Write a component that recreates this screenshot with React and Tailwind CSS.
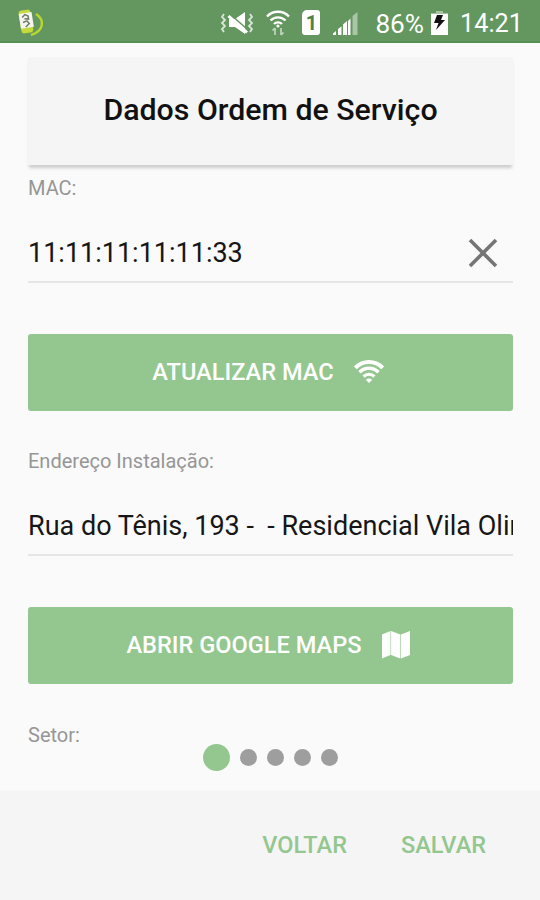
import React from "react";

const AppBadge = () => (
  <svg className="ml-[17px] h-[30px] w-[28px]" viewBox="0 0 28 30">
    <path d="M19 6 C28 12 27 23 14 27" fill="none" stroke="#b9d532" strokeWidth="2.4" />
    <g transform="rotate(-9 9 14)">
      <rect x="3" y="2" width="12" height="23" rx="3" fill="#c6da3c" />
      <rect x="3" y="5" width="13" height="15" fill="#f4f5ef" />
      <path d="M6 9l3-2.500 3 2v3l-4-1M6 14l4-1 2 3-4 3" fill="none" stroke="#6e7c62" strokeWidth="1.500" />
    </g>
  </svg>
);

const MuteIcon = () => (
  <svg className="h-[24px] w-[34px]" viewBox="0 0 34 24" fill="none" stroke="#fff">
    <path d="M4 3L2 6l3 3-3 3 3 3-3 3 2 3M30 3l2 3-3 3 3 3-3 3 3 3-2 3" strokeWidth="1.800" opacity="0.75" />
    <path d="M9 8h6l10-7v22l-10-7H9z" fill="#fff" stroke="none" />
    <path d="M11 4l16 14" stroke="#64975f" strokeWidth="1.600" />
    <path d="M8.500 5L27 21.500" strokeWidth="3" />
  </svg>
);

const WifiTransferIcon = () => (
  <svg className="h-[28px] w-[24px]" viewBox="0 0 24 28" fill="none" stroke="#fff">
    <path d="M1 7.500C7 1.200 17 1.200 23 7.500M4.500 11.500c4-4.200 11-4.200 15 0M8 15c2.200-2.200 5.800-2.200 8 0" strokeWidth="2.400" />
    <circle cx="12" cy="17" r="1.600" fill="#fff" stroke="none" />
    <path d="M9 26v-7M6.500 21.500L9 19M15 19v7M17.500 23.500L15 26" strokeWidth="1.700" opacity="0.6" />
  </svg>
);

const SignalIcon = () => (
  <svg className="h-[24px] w-[25px]" viewBox="0 0 25 24" fill="#fff">
    <path d="M0 24v-1.500L3 20v4zM5 24v-6l3.500-2.500V24zM10 24V13.500L14 10v14z" />
    <path d="M15 24V10l2.500-2.500V24z" />
    <path d="M19.500 24V5L24.500 1v23z" opacity="0.45" />
  </svg>
);

const BatteryIcon = () => (
  <svg className="h-[24px] w-[17px]" viewBox="0 0 17 24">
    <path d="M5 0h7v2h5v4H0V2h5z" fill="#a8c5a4" />
    <path d="M0 3h17v21H0z" fill="#fff" />
    <path d="M6 4h6l-2 5h4L5 19l2.500-7H3z" fill="#111" />
  </svg>
);

const WifiIcon = () => (
  <svg className="-mt-[2px] h-[24px] w-[30px]" viewBox="0 0 30 24" fill="none" stroke="#fff">
    <path d="M1.300 8.800C9 1 21 1 28.700 8.800" strokeWidth="4" />
    <path d="M5.500 13.300c5.500-5.300 13.500-5.300 19 0" strokeWidth="3.500" />
    <path d="M9.500 17.500c3.300-3 7.700-3 11 0" strokeWidth="3.200" />
    <path d="M15 24l-3.200-3.200c1.900-1.700 4.500-1.700 6.400 0z" fill="#fff" stroke="none" />
  </svg>
);

const MapIcon = () => (
  <svg className="h-[28px] w-[28px]" viewBox="0 0 28 28" fill="#fff">
    <path d="M0 3.500L8.500 0v24L0 27.500zM9.100 0l9.200 3.500v24L9.100 24zM18.900 3.500L28 0v24l-9.100 3.500z" />
  </svg>
);

const CloseIcon = () => (
  <svg className="h-[30px] w-[30px] shrink-0" viewBox="0 0 30 30">
    <path d="M2 2l26 26M28 2L2 28" stroke="#757575" strokeWidth="3.600" />
  </svg>
);

const StatusBar = () => (
  <header className="flex h-[43px] shrink-0 items-center border-b-2 border-[#559052] bg-[#64975f] text-white">
    <div className="pt-[4px]">
      <AppBadge />
    </div>
    <div className="ml-auto flex items-center pr-[17px] pt-[5px]">
      <MuteIcon />
      <div className="ml-[12px]">
        <WifiTransferIcon />
      </div>
      <div className="ml-[12px] flex h-[25px] w-[18px] items-center justify-center rounded-[3px] rounded-tl-[5px] bg-white text-[20px] font-bold leading-none text-[#4f824b]">
        1
      </div>
      <div className="ml-[13px]">
        <SignalIcon />
      </div>
      <span className="ml-[17px] pt-[2px] text-[26.200px] leading-none">86%</span>
      <div className="ml-[7px]">
        <BatteryIcon />
      </div>
      <span className="ml-[12px] pt-[2px] text-[25.300px] leading-none">14:21</span>
    </div>
  </header>
);

const Field = ({ label, value, clearable }) => (
  <div>
    <label className="block h-[22px] text-[20px] leading-[22px] text-[#969696]">
      {label}
    </label>
    <div className="flex h-[84px] items-center border-b-2 border-[#e6e6e6] pt-[25px]">
      <span className="flex-1 overflow-hidden whitespace-pre text-[27px] leading-[34px] text-[#161616]">
        {value}
      </span>
      {clearable && (
        <div className="mr-[15px]">
          <CloseIcon />
        </div>
      )}
    </div>
  </div>
);

const ActionButton = ({ children, icon }) => (
  <button className="mt-[51px] mb-[39px] flex h-[77px] w-full items-center justify-center gap-[20px] rounded-[3px] bg-[#93c78f] pr-[5px] text-[23.600px] font-medium text-white">
    <span>{children}</span>
    <span className="pb-[2px]">{icon}</span>
  </button>
);

const App = () => {
  const steps = [0, 1, 2, 3, 4];

  return (
    <div className="flex h-[900px] w-[540px] flex-col overflow-hidden bg-[#fafafa] font-['Roboto',sans-serif]">
      <StatusBar />

      <main className="flex h-[748px] shrink-0 flex-col pl-[28px] pr-[27px] pt-[14px]">
        <div className="mb-[12px] flex h-[108px] shrink-0 items-center justify-center bg-[#f5f5f5] pb-[2px] shadow-[0_4px_3px_-1px_rgba(0,0,0,0.18)]">
          <h1 className="text-[30.300px] font-medium leading-none text-[#111]">
            Dados Ordem de Serviço
          </h1>
        </div>

        <Field label="MAC:" value="11:11:11:11:11:33" clearable />
        <ActionButton icon={<WifiIcon />}>ATUALIZAR MAC</ActionButton>

        <Field
          label="Endereço Instalação:"
          value="Rua do Tênis, 193 -  - Residencial Vila Olimpia"
        />
        <ActionButton icon={<MapIcon />}>ABRIR GOOGLE MAPS</ActionButton>

        <div className="mt-px text-[20px] leading-[22px] text-[#969696]">
          Setor:
        </div>

        {/* Step indicator */}
        <div className="-mt-[2px] flex items-center justify-center gap-[10px]">
          {steps.map((step) => (
            <span
              key={step}
              className={
                step === 0
                  ? "h-[27px] w-[27px] rounded-full bg-[#93c78f]"
                  : "h-[17px] w-[17px] rounded-full bg-[#9e9e9e]"
              }
            />
          ))}
        </div>
      </main>

      <footer className="flex flex-1 items-center justify-end gap-[54px] bg-[#f5f5f5] pr-[54px] pt-[1px] text-[23.500px] font-medium text-[#93c78f]">
        <button>VOLTAR</button>
        <button>SALVAR</button>
      </footer>
    </div>
  );
};

export default App;
